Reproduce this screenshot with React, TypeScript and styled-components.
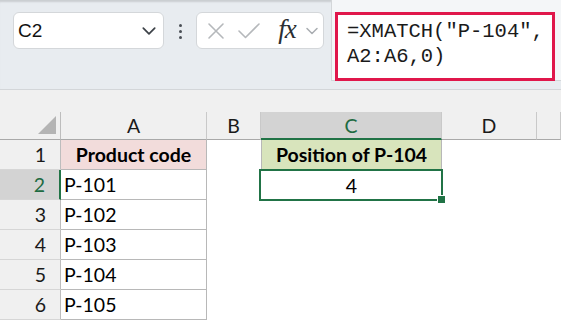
import React from 'react';
import styled, { createGlobalStyle } from 'styled-components';

const GlobalStyle = createGlobalStyle`
  html, body {
    margin: 0;
    padding: 0;
    background: #ffffff;
    overflow: hidden;
  }
  * {
    box-sizing: border-box;
  }
`;

const Page = styled.div`
  width: 561px;
  height: 320px;
  overflow: hidden;
  background: #ffffff;
`;

const Toolbar = styled.div`
  display: flex;
  align-items: flex-start;
  height: 90px;
  background: #e8ecf0;
  border-bottom: 1px solid #d3d6d9;
  box-shadow: inset 0 3px 2px -1px rgba(0, 0, 0, 0.13);
`;

const NameBox = styled.div`
  display: flex;
  align-items: center;
  justify-content: space-between;
  width: 151px;
  height: 37px;
  margin: 12px 0 0 13px;
  padding: 0 6px 0 4px;
  background: #ffffff;
  border: 1px solid #d4d7da;
  border-radius: 6px;
  font-family: 'Liberation Sans', Arial, sans-serif;
  font-size: 19px;
  color: #111;
`;

const Dots = styled.div`
  display: flex;
  flex-direction: column;
  gap: 3px;
  margin: 24px 14px 0 15px;

  span {
    width: 3px;
    height: 3px;
    border-radius: 50%;
    background: #4a4f55;
  }
`;

const ButtonsBox = styled.div`
  display: flex;
  align-items: center;
  width: 128px;
  height: 37px;
  margin-top: 12px;
  padding: 0 4px 0 6px;
  background: #ffffff;
  border: 1px solid #d4d7da;
  border-radius: 6px;
`;

const IconSlot = styled.div<{ $w: number }>`
  display: flex;
  align-items: center;
  justify-content: center;
  width: ${p => p.$w}px;
  height: 100%;
`;

const Fx = styled.span`
  font-family: 'Liberation Serif', 'Times New Roman', serif;
  font-style: italic;
  font-size: 27px;
  line-height: 1;
  color: #2b2f33;
  letter-spacing: -1px;
  margin-top: -2px;
`;

const FormulaArea = styled.div`
  flex: 1;
  height: 81px;
  margin-left: 7px;
  padding: 12px 6px 0 3px;
  border-left: 1px solid #d3d6d9;
  border-bottom: 1px solid #d3d6d9;
  background: #f4f6f8;
`;

const FormulaBox = styled.div`
  width: 220px;
  height: 69px;
  padding: 5px 0 0 9px;
  background: #ffffff;
  border: 3px solid #e0174b;
  font-family: 'Liberation Mono', 'Courier New', monospace;
  font-size: 20.5px;
  line-height: 24.5px;
  color: #1a1a1a;
  white-space: pre;
`;

const Band = styled.div`
  height: 22px;
  background: #f0f0f0;
`;

const Sheet = styled.div`
  display: grid;
  grid-template-columns: 61px 146px 54px 181px 95px 1fr;
  grid-template-rows: 28px repeat(6, 30px);
  font-family: Lato, 'Open Sans', sans-serif;
  font-size: 19.5px;
`;

const Corner = styled.div`
  position: relative;
  background: #f0f0f0;
  border-right: 1px solid #bdbdbd;
  border-bottom: 1px solid #a9a9a9;

  &::after {
    content: '';
    position: absolute;
    right: 4px;
    bottom: 5px;
    width: 0;
    height: 0;
    border-left: 18px solid transparent;
    border-bottom: 18px solid #b4b4b4;
  }
`;

const ColHeader = styled.div<{ $active?: boolean }>`
  display: flex;
  align-items: center;
  justify-content: center;
  background: ${p => (p.$active ? '#d3d3d3' : '#f0f0f0')};
  color: ${p => (p.$active ? '#1e6b42' : '#1a1a1a')};
  border-right: 1px solid #c9c9c9;
  border-bottom: ${p => (p.$active ? '2px solid #217346' : '1px solid #a9a9a9')};
  padding-top: ${p => (p.$active ? '1px' : '0')};
`;

const RowHeader = styled.div<{ $active?: boolean }>`
  display: flex;
  align-items: center;
  justify-content: flex-end;
  padding-right: 14px;
  background: ${p => (p.$active ? '#d3d3d3' : '#f0f0f0')};
  color: ${p => (p.$active ? '#1e6b42' : '#1a1a1a')};
  border-right: ${p => (p.$active ? '2px solid #217346' : '1px solid #bdbdbd')};
  border-bottom: 1px solid #d6d6d6;
`;

const Cell = styled.div<{
  $fill?: string;
  $bold?: boolean;
  $center?: boolean;
  $boxed?: boolean;
  $leftLine?: boolean;
}>`
  display: flex;
  align-items: center;
  justify-content: ${p => (p.$center ? 'center' : 'flex-start')};
  padding-left: ${p => (p.$center ? '0' : '3px')};
  background: ${p => p.$fill || '#ffffff'};
  font-weight: ${p => (p.$bold ? 700 : 400)};
  color: #000;
  border-right: ${p => (p.$boxed ? '1px solid #b8b8b8' : 'none')};
  border-bottom: ${p => (p.$boxed ? '1px solid #b8b8b8' : 'none')};
  border-left: ${p => (p.$leftLine ? '1px solid #b8b8b8' : 'none')};
`;

const SelectedCell = styled(Cell)`
  position: relative;

  &::after {
    content: '';
    position: absolute;
    left: -2px;
    top: -1px;
    right: -1px;
    bottom: -1px;
    border: 2px solid #217346;
    pointer-events: none;
  }

  &::before {
    content: '';
    position: absolute;
    right: -4px;
    bottom: -4px;
    width: 7px;
    height: 7px;
    background: #217346;
    border: 1px solid #ffffff;
    z-index: 1;
  }
`;

const Chevron = ({ color, size = 14 }: { color: string; size?: number }) => (
  <svg width={size} height={size} viewBox="0 0 14 14" fill="none">
    <polyline points="2,4.5 7,9.5 12,4.5" stroke={color} strokeWidth="1.5" strokeLinecap="round" strokeLinejoin="round" />
  </svg>
);

const CrossIcon = () => (
  <svg width="18" height="18" viewBox="0 0 18 18" fill="none">
    <path d="M2 2 L16 16 M16 2 L2 16" stroke="#b5b8bb" strokeWidth="1.6" strokeLinecap="round" />
  </svg>
);

const CheckIcon = () => (
  <svg width="24" height="18" viewBox="0 0 24 18" fill="none">
    <polyline points="2,9 8.5,15.5 22,2" stroke="#b5b8bb" strokeWidth="1.6" strokeLinecap="round" strokeLinejoin="round" />
  </svg>
);

const codes = ['P-101', 'P-102', 'P-103', 'P-104', 'P-105'];

const App: React.FC = () => {
  return (
    <Page>
      <GlobalStyle />
      <Toolbar>
        <NameBox>
          <span>C2</span>
          <Chevron color="#3d4248" size={16} />
        </NameBox>
        <Dots>
          <span />
          <span />
          <span />
        </Dots>
        <ButtonsBox>
          <IconSlot $w={26}>
            <CrossIcon />
          </IconSlot>
          <IconSlot $w={40}>
            <CheckIcon />
          </IconSlot>
          <IconSlot $w={36}>
            <Fx>fx</Fx>
          </IconSlot>
          <IconSlot $w={14}>
            <Chevron color="#a9adb1" />
          </IconSlot>
        </ButtonsBox>
        <FormulaArea>
          <FormulaBox>{'=XMATCH("P-104",\nA2:A6,0)'}</FormulaBox>
        </FormulaArea>
      </Toolbar>
      <Band />
      <Sheet>
        <Corner />
        <ColHeader>A</ColHeader>
        <ColHeader>B</ColHeader>
        <ColHeader $active>C</ColHeader>
        <ColHeader>D</ColHeader>
        <ColHeader />

        <RowHeader>1</RowHeader>
        <Cell $fill="#f2dcdb" $bold $center $boxed>Product code</Cell>
        <Cell />
        <Cell $fill="#d8e4bc" $bold $center $boxed $leftLine>Position of P-104</Cell>
        <Cell />
        <Cell />

        {codes.map((code, i) => (
          <React.Fragment key={code}>
            <RowHeader $active={i === 0}>{i + 2}</RowHeader>
            <Cell $boxed>{code}</Cell>
            <Cell />
            {i === 0 ? <SelectedCell $center>4</SelectedCell> : <Cell />}
            <Cell />
            <Cell />
          </React.Fragment>
        ))}
      </Sheet>
    </Page>
  );
};

export default App;
